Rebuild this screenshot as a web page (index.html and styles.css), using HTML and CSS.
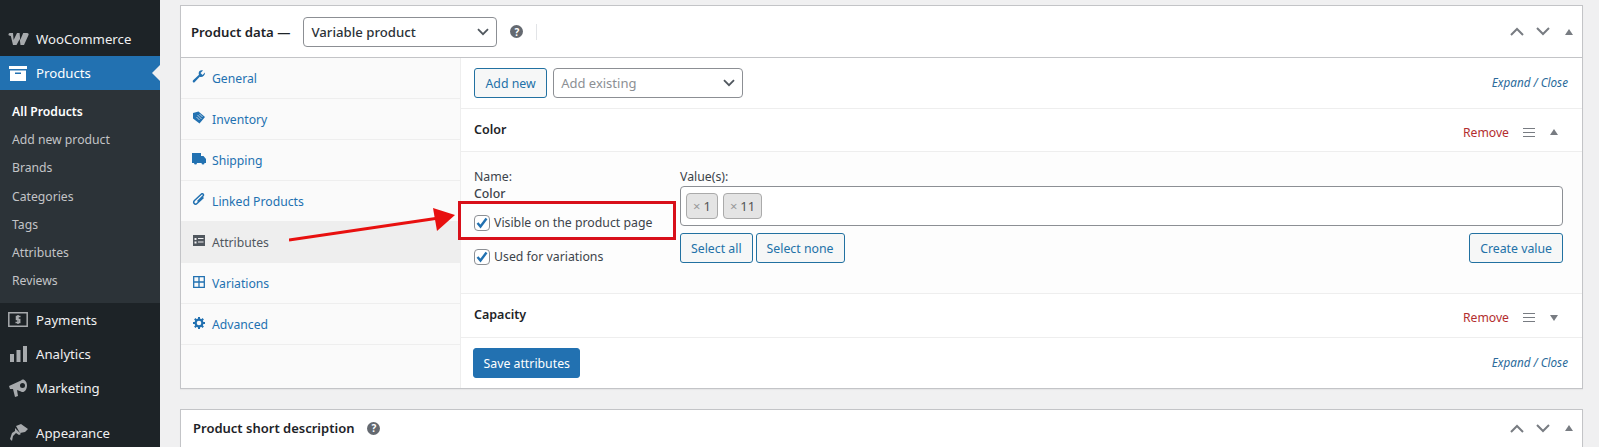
FILE: index.html
```html
<!DOCTYPE html>
<html lang="en">
<head>
<meta charset="utf-8">
<title>Product data</title>
<link rel="stylesheet" href="styles.css">
</head>
<body>
<div class="page">
<nav class="sidebar">
  <div class="menu-item"><span class="mi"><svg width="22" height="14" viewBox="0 0 22 14"><path fill="#a7aaad" d="M3 1h3l.6 7L10 1h2.600l.6 7 3-7H20c1.500 0 2 1 1.500 2L17 13h-3.500l-.8-6-3.200 6H6L3.800 4 2 3.500C1 3 1.500 1 3 1z"/></svg></span>WooCommerce</div>
  <div class="menu-item current"><span class="mi"><svg width="18" height="15" viewBox="0 0 18 15"><path fill="#fff" d="M0 0h18v3H0zM1 4.500h16V15H1zM6 6.500v1.500h6V6.500z"/></svg></span>Products</div>
  <ul class="submenu">
    <li class="active">All Products</li>
    <li>Add new product</li>
    <li>Brands</li>
    <li>Categories</li>
    <li>Tags</li>
    <li>Attributes</li>
    <li>Reviews</li>
  </ul>
  <div class="menu-item"><span class="mi"><svg width="20" height="15" viewBox="0 0 20 15"><path fill="none" stroke="#a7aaad" stroke-width="1.500" d="M.8.800h18.400v13.400H.8z"/><path fill="none" stroke="#a7aaad" stroke-width="1.500" d="M12.500 4.500H8.500v3h3.200v3H7.500M10 3v9"/></svg></span>Payments</div>
  <div class="menu-item"><span class="mi"><svg width="18" height="16" viewBox="0 0 18 16"><path fill="#a7aaad" d="M1 8h4v8H1zM7.500 4h4v12h-4zM14 0h4v16h-4z"/></svg></span>Analytics</div>
  <div class="menu-item"><span class="mi"><svg width="19" height="18" viewBox="0 0 19 18"><path fill="#a7aaad" d="M0 7l12-5.500C14-1 18 2 18 6.500s-3.500 8-6 6L8 11l1 6-3 1-2-8H1z"/><circle cx="13.500" cy="6.500" r="2.500" fill="#1d2327"/></svg></span>Marketing</div>
  <div class="menu-item appearance"><span class="mi"><svg width="19" height="17" viewBox="0 0 19 17"><path fill="#a7aaad" d="M7 2l5-2 7 5-3 3-5 1zM6 4l6 6-2 1-3-2-3 3-1 5-2-2 2-6 3-2z"/></svg></span>Appearance</div>
</nav>
<main class="content">
  <section class="box">
    <header class="box-head">
      <strong class="box-title">Product data —</strong>
      <div class="select type-select">Variable product<svg class="chev" width="12" height="8" viewBox="0 0 12 8"><path fill="none" stroke="#50575e" stroke-width="1.800" d="M1 1.200l5 5 5-5"/></svg></div>
      <span class="help">?</span>
      <span class="divider"></span>
      <div class="handles">
        <svg width="14" height="9" viewBox="0 0 14 9"><path fill="none" stroke="#787c82" stroke-width="2" d="M1 8l6-6 6 6"/></svg>
        <svg width="14" height="9" viewBox="0 0 14 9"><path fill="none" stroke="#787c82" stroke-width="2" d="M1 1l6 6 6-6"/></svg>
        <svg width="8" height="6" viewBox="0 0 8 6"><path fill="#787c82" d="M4 0l4 6H0z"/></svg>
      </div>
    </header>
    <div class="panel-wrap">
      <ul class="tabs">
        <li><svg width="13" height="13" viewBox="0 0 13 13"><path fill="#2271b1" d="M12.500 2.500L10 5l-2-2L10.500.5C8.500-.5 6 1 6.200 3.500c0 .6.100 1 .3 1.300L.6 10.200c-.8.800-.3 2.500 1.200 2.300l5.500-5.800c2.500.8 5.500-1.200 5.200-4.200z"/></svg>General</li>
        <li><svg width="13" height="13" viewBox="0 0 13 13"><path fill="#2271b1" d="M6 .5L12.500 6 7 12.500.5 7.500V2z"/><path stroke="#f6f7f7" stroke-width=".7" d="M5 4l4 4M4 6l3 3M7 3l3 3"/></svg>Inventory</li>
        <li><svg width="14" height="12" viewBox="0 0 14 12"><path fill="#2271b1" d="M0 0h9v3h2.500L14 6v4h-1.500a1.500 1.500 0 0 1-3 0H5a1.500 1.500 0 0 1-3 0H0z"/></svg>Shipping</li>
        <li><svg width="13" height="13" viewBox="0 0 13 13"><path fill="none" stroke="#2271b1" stroke-width="1.500" d="M5 8.500l5.500-5.500c1.500-1.500-.5-3-1.800-1.800L2 7.500c-2 2 .5 5 2.500 3L11 4.500"/></svg>Linked Products</li>
        <li class="on"><svg width="12" height="11" viewBox="0 0 12 11"><path fill="#50575e" d="M0 0h12v11H0z"/><path fill="#f0f0f1" d="M1.500 3h2v2h-2zM5 3h5.500v1H5zM1.500 6.500h2v2h-2zM5 6.500h5.500v1H5z"/></svg>Attributes</li>
        <li><svg width="12" height="12" viewBox="0 0 12 12"><path fill="none" stroke="#2271b1" stroke-width="1.300" d="M.7.700h10.600v10.600H.7zM6 .7v10.600M.7 6h10.600"/></svg>Variations</li>
        <li><svg width="12" height="12" viewBox="0 0 12 12"><circle cx="6" cy="6" r="3.400" fill="none" stroke="#2271b1" stroke-width="2.200"/><path stroke="#2271b1" stroke-width="2" d="M6 0v2.500M6 9.500V12M0 6h2.500M9.500 6H12M1.800 1.800l1.700 1.700M8.500 8.500l1.700 1.700M1.800 10.200l1.700-1.700M8.500 3.500l1.700-1.700"/></svg>Advanced</li>
      </ul>
      <div class="panel">
        <div class="toolbar">
          <span class="btn add-new">Add new</span>
          <div class="select add-select">Add existing<svg class="chev" width="12" height="8" viewBox="0 0 12 8"><path fill="none" stroke="#50575e" stroke-width="1.800" d="M1 1.200l5 5 5-5"/></svg></div>
          <a class="expand">Expand / Close</a>
        </div>
        <div class="attr-head">
          <strong>Color</strong>
          <span class="remove">Remove</span>
          <span class="sort"></span>
          <svg width="8" height="6" viewBox="0 0 8 6"><path fill="#787c82" d="M4 0l4 6H0z"/></svg>
        </div>
        <div class="attr-body">
          <div class="attr-left">
            <div class="attr-label">Name:</div>
            <div class="attr-name">Color</div>
            <label class="check first"><span class="cb"><svg width="14" height="12" viewBox="0 0 14 12"><path fill="none" stroke="#2271b1" stroke-width="2.400" d="M2.500 6l3 3.500 6-8"/></svg></span>Visible on the product page</label>
            <label class="check"><span class="cb"><svg width="14" height="12" viewBox="0 0 14 12"><path fill="none" stroke="#2271b1" stroke-width="2.400" d="M2.500 6l3 3.500 6-8"/></svg></span>Used for variations</label>
          </div>
          <div class="attr-right">
            <div class="attr-label">Value(s):</div>
            <div class="tokens">
              <span class="chip"><i>×</i>1</span>
              <span class="chip"><i>×</i>11</span>
            </div>
            <div class="value-btns">
              <span class="btn">Select all</span>
              <span class="btn">Select none</span>
              <span class="btn push">Create value</span>
            </div>
          </div>
          <div class="callout"></div>
        </div>
        <div class="attr-head second">
          <strong>Capacity</strong>
          <span class="remove">Remove</span>
          <span class="sort"></span>
          <svg width="8" height="6" viewBox="0 0 8 6"><path fill="#787c82" d="M4 6l4-6H0z"/></svg>
        </div>
        <div class="savebar">
          <span class="btn primary">Save attributes</span>
          <a class="expand">Expand / Close</a>
        </div>
      </div>
    </div>
    <svg class="arrow" width="170" height="36" viewBox="0 0 170 36"><path fill="none" stroke="#e8100f" stroke-width="3" d="M0 32L150 10"/><path fill="#e8100f" d="M144 0l22 7-18 16z"/></svg>
  </section>
  <section class="box short">
    <header class="short-head">
      <strong class="short-title">Product short description</strong>
      <span class="help">?</span>
      <div class="handles">
        <svg width="14" height="9" viewBox="0 0 14 9"><path fill="none" stroke="#787c82" stroke-width="2" d="M1 8l6-6 6 6"/></svg>
        <svg width="14" height="9" viewBox="0 0 14 9"><path fill="none" stroke="#787c82" stroke-width="2" d="M1 1l6 6 6-6"/></svg>
        <svg width="8" height="6" viewBox="0 0 8 6"><path fill="#787c82" d="M4 0l4 6H0z"/></svg>
      </div>
    </header>
  </section>
</main>
</div>
</body>
</html>
```
FILE: styles.css
```css
* { box-sizing: border-box; }
html, body { margin: 0; padding: 0; height: 447px; overflow: hidden; background: #f0f0f1; }
body { font-family: "Noto Sans", "Open Sans", sans-serif; font-size: 13px; color: #3c434a; }
ul { list-style: none; margin: 0; padding: 0; }
.page { display: flex; height: 447px; overflow: hidden; }

.sidebar { width: 160px; flex: none; background: #1d2327; padding-top: 22px; color: #f0f0f1; }
.menu-item { position: relative; display: flex; align-items: center; height: 34px; font-size: 13.200px; color: #f0f0f1; }
.mi { width: 36px; flex: none; display: flex; justify-content: center; color: #a7aaad; }
.menu-item.current { background: #2271b1; color: #fff; }
.menu-item.current::after { content: ""; position: absolute; right: 0; top: 9px; border: 8px solid transparent; border-left: 0; border-right-color: #f0f0f1; }
.appearance { margin-top: 11px; }
.submenu { background: #2c3338; padding: 8px 0 7.600px; }
.submenu li { height: 28.200px; line-height: 28.200px; padding-left: 12px; font-size: 12.200px; color: #c3c4c7; }
.submenu .active { color: #fff; font-weight: 600; }

.content { flex: 1; min-width: 0; padding: 5px 16px 0 20px; }
.box { position: relative; background: #fff; border: 1px solid #c3c4c7; box-shadow: 0 1px 1px rgba(0,0,0,.04); }
.box-head { display: flex; align-items: center; height: 52px; padding: 0 0 0 10px; border-bottom: 1px solid #c3c4c7; }
.box-title { font-weight: 600; color: #1d2327; font-size: 13.200px; margin-right: 13px; }
.select { display: flex; align-items: center; justify-content: space-between; background: #fff; border: 1px solid #8c8f94; border-radius: 4px; height: 30px; padding: 0 7px; }
.type-select { width: 194px; color: #2c3338; font-weight: 500; font-size: 13.200px; }
.add-select { width: 190px; color: #8c8f94; margin-left: 6px; }
.help { display: flex; align-items: center; justify-content: center; width: 13px; height: 13px; border-radius: 50%; background: #646970; color: #fff; font-size: 10px; font-weight: 700; line-height: 1; margin-left: 13px; }
.divider { width: 1px; height: 16px; background: #e2e4e7; margin-left: 13px; }
.handles { margin-left: auto; display: flex; align-items: center; gap: 12px; padding-right: 9px; }
.handles svg:last-child { margin-left: 3px; }

.panel-wrap { display: flex; height: 330px; }
.tabs { width: 280px; flex: none; background: #fafafa; border-right: 1px solid #eee; }
.tabs li { display: flex; align-items: center; gap: 6px; height: 41px; padding-left: 11px; border-bottom: 1px solid #eee; color: #2271b1; font-size: 12.200px; }
.tabs li svg { width: 14px; flex: none; margin-top: -3px; }
.tabs .on { background: #eee; color: #50575e; }

.panel { flex: 1; min-width: 0; display: flex; flex-direction: column; }
.toolbar { display: flex; align-items: center; height: 51px; padding: 0 14px 0 13px; border-bottom: 1px solid #eee; }
.btn { display: inline-flex; align-items: center; justify-content: center; height: 30px; padding: 0 10px; border: 1px solid #2271a1; border-radius: 3px; background: #f6f7f7; color: #2271a8; font-size: 12.300px; }
.add-new { padding: 0 10.500px; }
.expand { margin-left: auto; font-style: italic; font-size: 11.700px; color: #2a6a9a; margin-top: -2px; }
.attr-head { display: flex; align-items: center; height: 43px; padding: 4px 24px 0 13px; border-bottom: 1px solid #eee; }
.attr-head strong { font-weight: 600; color: #1d2327; font-size: 12.500px; margin-top: -6px; }
.attr-head.second { height: 44px; }
.remove { margin-left: auto; color: #b32d2e; font-size: 12.200px; }
.sort { width: 12px; height: 9px; margin-left: 14px; margin-right: 15px; border-top: 1px solid #787c82; border-bottom: 1px solid #787c82; background: linear-gradient(#787c82, #787c82) center / 100% 1px no-repeat; }
.attr-body { position: relative; display: flex; height: 142px; background: #fdfdfd; border-bottom: 1px solid #eee; padding: 16px 19px 0 13px; }
.attr-left { width: 206px; flex: none; font-size: 12.300px; }
.attr-right { flex: 1; min-width: 0; }
.attr-label { line-height: 18px; font-size: 12.300px; }
.attr-name { line-height: 16px; font-size: 12.300px; font-weight: 500; }
.check { display: flex; align-items: center; gap: 4px; height: 17px; margin-top: 17px; }
.check.first { margin-top: 12px; }
.cb { display: flex; align-items: center; justify-content: center; width: 16px; height: 16px; border: 1px solid #8c8f94; border-radius: 4px; background: #fff; }
.tokens { display: flex; align-items: center; gap: 5px; height: 40px; padding: 0 5px; background: #fff; border: 1px solid #8c8f94; border-radius: 4px; }
.chip { display: flex; align-items: center; gap: 3px; height: 26px; padding: 0 6px; border: 1px solid #aaa; border-radius: 4px; background: #e4e4e4; color: #555; font-size: 13px; }
.chip i { font-style: normal; color: #999; }
.value-btns { display: flex; gap: 3px; margin-top: 7px; }
.push { margin-left: auto; }
.callout { position: absolute; left: -3px; top: 49px; width: 218px; height: 39px; border: 3px solid #d8101a; }
.savebar { display: flex; align-items: center; flex: 1; padding: 0 14px 0 12px; }
.primary { height: 30px; background: #2271b1; color: #fff; border-color: #2271b1; padding: 0 9.500px; }
.arrow { position: absolute; left: 108px; top: 202px; }
.short { margin-top: 20px; height: 39px; }
.short-head { display: flex; align-items: center; height: 36px; padding-left: 12px; }
.short-title { font-weight: 600; color: #1d2327; font-size: 13px; }
.short-head .help { margin-left: 13px; }
```
